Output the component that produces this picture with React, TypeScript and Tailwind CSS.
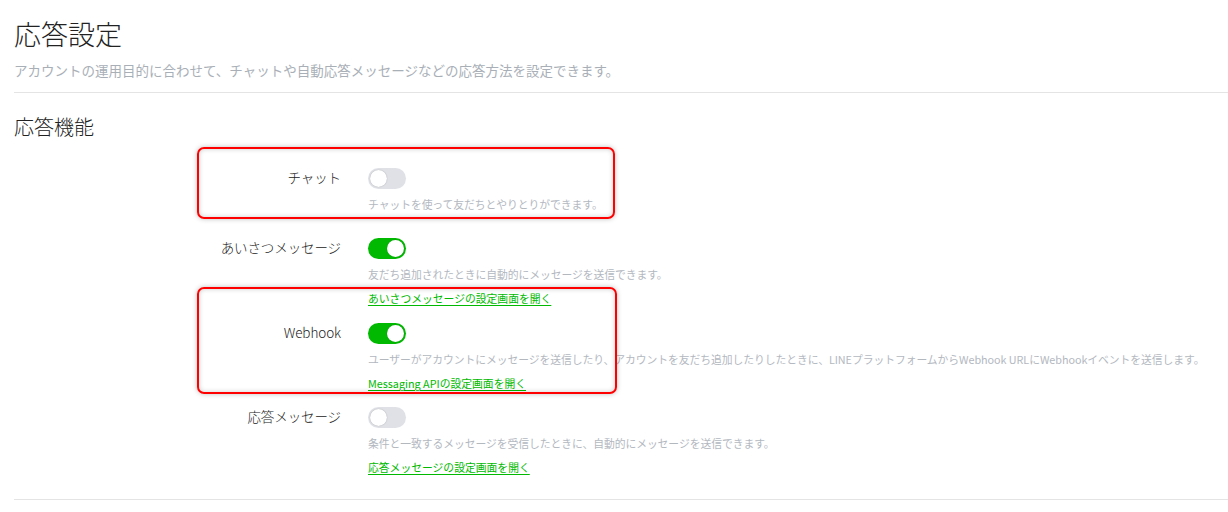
import React from "react";

type Row = {
  label: string;
  on: boolean;
  desc: string;
  link?: string;
  pb: string;
};

const rows: Row[] = [
  {
    label: "チャット",
    on: false,
    desc: "チャットを使って友だちとやりとりができます。",
    pb: "pb-[26px]",
  },
  {
    label: "あいさつメッセージ",
    on: true,
    desc: "友だち追加されたときに自動的にメッセージを送信できます。",
    link: "あいさつメッセージの設定画面を開く",
    pb: "pb-[17px]",
  },
  {
    label: "Webhook",
    on: true,
    desc: "ユーザーがアカウントにメッセージを送信したり、アカウントを友だち追加したりしたときに、LINEプラットフォームからWebhook URLにWebhookイベントを送信します。",
    link: "Messaging APIの設定画面を開く",
    pb: "pb-[16px]",
  },
  {
    label: "応答メッセージ",
    on: false,
    desc: "条件と一致するメッセージを受信したときに、自動的にメッセージを送信できます。",
    link: "応答メッセージの設定画面を開く",
    pb: "pb-[24px]",
  },
];

function Toggle({ on }: { on: boolean }) {
  return (
    <div
      className={
        "flex h-[21px] w-[38px] items-center rounded-full p-[2px] " +
        (on ? "justify-end bg-[#00b900]" : "justify-start bg-[#dfe1e6]")
      }
    >
      <div className="h-[17px] w-[17px] rounded-full bg-white shadow-[0_0_1px_rgba(0,0,0,0.35)]" />
    </div>
  );
}

export default function App() {
  return (
    <div className="relative w-full bg-white pl-[14px] font-['Noto_Sans_CJK_JP','Noto_Sans',sans-serif]">
      <h1 className="pt-[16px] text-[27px] font-light leading-[36px] text-[#222]">応答設定</h1>
      <p className="mt-[8px] text-[13.5px] leading-[20px] text-[#a9afb7]">
        アカウントの運用目的に合わせて、チャットや自動応答メッセージなどの応答方法を設定できます。
      </p>
      <div className="mt-[12px] h-px bg-[#e4e4e4]" />

      <h2 className="mt-[20px] text-[20px] font-light leading-[28px] text-[#222]">応答機能</h2>

      <div className="mt-[27px]">
        {rows.map((row) => (
          <div key={row.label} className={"flex items-start " + row.pb}>
            <div className="w-[327px] text-right text-[13.5px] font-light leading-[19px] tracking-[-0.1px] text-[#222]">
              {row.label}
            </div>
            <div className="ml-[27px] flex flex-col">
              <Toggle on={row.on} />
              <p className="mt-[7px] text-[10.8px] leading-[16px] tracking-[-0.05px] text-[#b3b8bf]">{row.desc}</p>
              {row.link && (
                <a
                  href="#"
                  className="mt-[8px] text-[10.8px] leading-[16px] text-[#00b900] underline underline-offset-[1.5px]"
                >
                  {row.link}
                </a>
              )}
            </div>
          </div>
        ))}
      </div>

      <div className="h-px bg-[#e4e4e4]" />
      <div className="h-[12px]" />

      {/* annotation boxes */}
      <div className="pointer-events-none absolute left-[197px] top-[147px] h-[72px] w-[418px] rounded-[7px] border-2 border-[#ff0000] shadow-[0_0_5px_rgba(0,0,0,0.25),inset_0_0_5px_rgba(0,0,0,0.2)]" />
      <div className="pointer-events-none absolute left-[197px] top-[287px] h-[107px] w-[420px] rounded-[7px] border-2 border-[#ff0000] shadow-[0_0_5px_rgba(0,0,0,0.25),inset_0_0_5px_rgba(0,0,0,0.2)]" />
    </div>
  );
}
